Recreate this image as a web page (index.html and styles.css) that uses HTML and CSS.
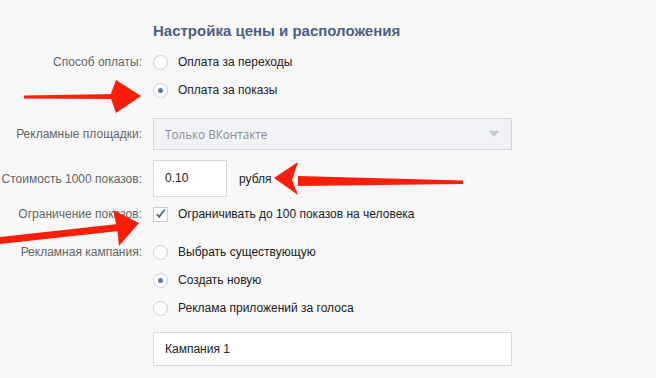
FILE: index.html
```html
<!DOCTYPE html>
<html lang="ru">
<head>
  <meta charset="UTF-8">
  <title>Настройка цены и расположения</title>
  <meta name="viewport" content="width=device-width, initial-scale=1.0">
  <link rel="stylesheet" href="styles.css">
</head>
<body>

  <div class="page">

    <h3 class="title">Настройка цены и расположения</h3>

    <!-- Payment method -->
    <div class="row">
      <div class="label">Способ оплаты:</div>
      <div class="field">
        <span class="radio"></span>
        <span class="text">Оплата за переходы</span>
      </div>
    </div>
    <div class="row">
      <div class="label"></div>
      <div class="field">
        <span class="radio on"></span>
        <span class="text">Оплата за показы</span>
      </div>
    </div>

    <!-- Platforms -->
    <div class="row row-select">
      <div class="label">Рекламные площадки:</div>
      <div class="select">
        <span>Только ВКонтакте</span>
        <span class="caret"></span>
      </div>
    </div>

    <!-- Price -->
    <div class="row row-price">
      <div class="label">Стоимость 1000 показов:</div>
      <div class="field">
        <div class="price">0.10</div>
        <span class="text unit">рубля</span>
      </div>
    </div>

    <!-- Limit -->
    <div class="row row-check">
      <div class="label">Ограничение показов:</div>
      <div class="field">
        <span class="check">
          <svg width="14" height="14" viewBox="0 0 14 14"><path d="M3 7.2 L5.6 10 L11.6 2.2" fill="none" stroke="#4d6f97" stroke-width="2"/></svg>
        </span>
        <span class="text">Ограничивать до 100 показов на человека</span>
      </div>
    </div>

    <!-- Campaign -->
    <div class="row row-camp">
      <div class="label">Рекламная кампания:</div>
      <div class="field">
        <span class="radio"></span>
        <span class="text">Выбрать существующую</span>
      </div>
    </div>
    <div class="row">
      <div class="label"></div>
      <div class="field">
        <span class="radio on"></span>
        <span class="text">Создать новую</span>
      </div>
    </div>
    <div class="row">
      <div class="label"></div>
      <div class="field">
        <span class="radio"></span>
        <span class="text">Реклама приложений за голоса</span>
      </div>
    </div>

    <div class="row row-name">
      <div class="label"></div>
      <div class="name">Кампания 1</div>
    </div>

    <!-- Red arrows drawn over the form -->
    <svg class="arrows" width="656" height="378" viewBox="0 0 656 378">
      <g fill="#fb1e08">
        <polygon points="24,95.5 116,94 116,99 24,98.5"/>
        <polygon points="116,80 141,96 116,113 110,96"/>
        <polygon points="463,180.5 298,176 298,186 463,184"/>
        <polygon points="274,178 298,162 292,180 298,195"/>
        <polygon points="0,237 118,224 119,231 0,244"/>
        <polygon points="113,210 139,223 119,246 117,228"/>
      </g>
    </svg>

  </div>

</body>
</html>
```

FILE: styles.css
```css
body {
  margin: 0;
  background: #f8f8f9;
  font-family: 'Liberation Sans', Arial, sans-serif;
  font-size: 12px;
  color: #222;
}

.page {
  position: relative;
  width: 656px;
  height: 378px;
  padding-top: 21px;
  box-sizing: border-box;
  overflow: hidden;
}

.title {
  margin: 0 0 7px 153px;
  height: 20px;
  line-height: 20px;
  font-size: 15px;
  font-weight: bold;
  color: #4c6183;
}

.row {
  display: flex;
  align-items: center;
  gap: 11px;
  height: 28px;
}

.label {
  width: 142px;
  flex: none;
  text-align: right;
  white-space: nowrap;
  color: #656565;
}

.field {
  display: flex;
  align-items: center;
}

.text {
  margin-left: 10px;
}

.radio {
  width: 13px;
  height: 13px;
  border: 1px solid #c8d0d9;
  border-radius: 50%;
  background: #fff;
  position: relative;
  box-sizing: content-box;
}

.radio.on::after {
  content: "";
  position: absolute;
  left: 4px;
  top: 4px;
  width: 5px;
  height: 5px;
  border-radius: 50%;
  background: #5a7aa0;
}

.row-select {
  margin-top: 14px;
  height: 32px;
}

.select {
  width: 359px;
  height: 32px;
  box-sizing: border-box;
  border: 1px solid #d3d9df;
  background: #f0f2f5;
  display: flex;
  align-items: center;
  justify-content: space-between;
  padding: 0 12px 0 11px;
  font-family: 'Open Sans', sans-serif;
  font-size: 11.7px;
  color: #8a8f96;
}

.caret {
  width: 0;
  height: 0;
  border-left: 5px solid transparent;
  border-right: 5px solid transparent;
  border-top: 6px solid #c3c8cf;
}

.row-price {
  margin-top: 10px;
  height: 37px;
}

.price {
  width: 74px;
  height: 37px;
  box-sizing: border-box;
  border: 1px solid #d3d9df;
  background: #fff;
  padding-left: 11px;
  line-height: 35px;
}

.unit {
  margin-left: 12px;
}

.row-check {
  margin-top: 3px;
}

.check {
  width: 13px;
  height: 13px;
  border: 1px solid #c8d0d9;
  background: #fff;
  display: flex;
  align-items: center;
  justify-content: center;
}

.row-camp {
  margin-top: 10px;
}

.row-name {
  margin-top: 10px;
  height: 34px;
}

.name {
  width: 359px;
  height: 34px;
  box-sizing: border-box;
  border: 1px solid #d3d9df;
  background: #fff;
  padding-left: 11px;
  line-height: 32px;
}

.arrows {
  position: absolute;
  left: 0;
  top: 0;
}
```
